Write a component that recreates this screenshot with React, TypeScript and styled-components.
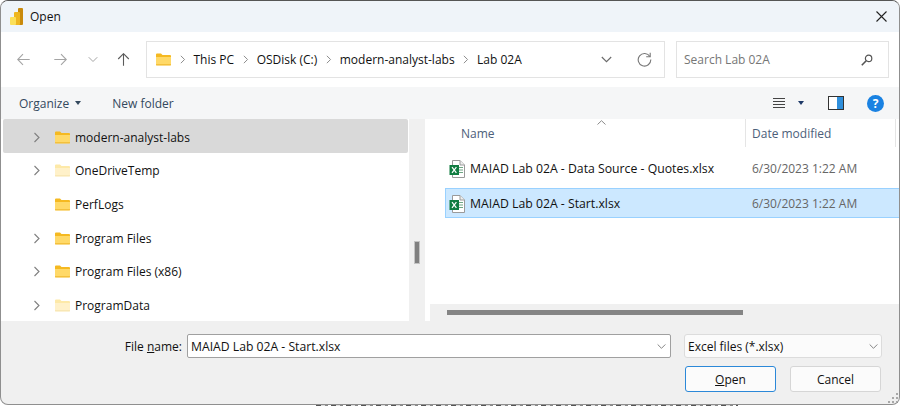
import React from "react";
import styled, { createGlobalStyle } from "styled-components";

const GlobalStyle = createGlobalStyle`
  html, body {
    margin: 0;
    padding: 0;
    background: #fff;
  }
  * {
    box-sizing: border-box;
  }
`;

const Page = styled.div`
  width: 900px;
  height: 406px;
  overflow: hidden;
  background: #fff;
  font-family: "Open Sans", "Noto Sans", sans-serif;
  font-size: 12px;
  color: #111;
`;

const Dialog = styled.div`
  width: 900px;
  height: 405px;
  border: 1px solid #8f8f8f;
  border-top-color: #555;
  border-radius: 8px;
  overflow: hidden;
  display: flex;
  flex-direction: column;
  background: #f0f0f0;
`;

// cut off text of the window behind the dialog
const BehindStrip = styled.div`
  height: 1px;
  margin-left: 316px;
  width: 422px;
  background: repeating-linear-gradient(90deg, #555 0 5px, #ddd 5px 9px, #888 9px 12px, #fff 12px 15px);
`;

const TitleBar = styled.div`
  height: 31px;
  flex-shrink: 0;
  background: #eff4f9;
  display: flex;
  align-items: center;
  padding: 0 12px 0 9px;
  gap: 7px;
`;

const CloseButton = styled.div`
  margin-left: auto;
  display: flex;
`;

const NavBar = styled.div`
  height: 55px;
  flex-shrink: 0;
  background: #fff;
  display: flex;
  align-items: center;
  padding: 0 10px 0 7px;
`;

const NavButton = styled.div<{ $w: number }>`
  width: ${(p) => p.$w}px;
  flex-shrink: 0;
  display: flex;
  justify-content: center;
`;

const ArrowSvg = styled.svg<{ $rotate: number }>`
  transform: rotate(${(p) => p.$rotate}deg);
`;

const Breadcrumb = styled.div`
  width: 519px;
  height: 37px;
  flex-shrink: 0;
  margin-left: 4px;
  border: 1px solid #e3e3e3;
  display: flex;
  align-items: center;
  padding: 0 12px 0 9px;
  gap: 6.75px;
`;

const RightIcons = styled.div`
  margin-left: auto;
  display: flex;
  align-items: center;
  gap: 25px;
`;

const SearchBox = styled.div`
  width: 213px;
  height: 37px;
  flex-shrink: 0;
  margin-left: 11px;
  border: 1px solid #e3e3e3;
  display: flex;
  align-items: center;
  justify-content: space-between;
  padding: 0 15px 0 7px;
  color: #767676;
`;

const Toolbar = styled.div`
  height: 32px;
  flex-shrink: 0;
  background: #f5f6f7;
  display: flex;
  align-items: center;
  padding: 0 15px 0 18px;
  color: #34495e;
`;

const ToolLabel = styled.span`
  display: flex;
  align-items: center;
  gap: 6px;
  margin-right: 31px;
`;

const Caret = styled.span<{ $color?: string }>`
  width: 0;
  height: 0;
  border-left: 3.5px solid transparent;
  border-right: 3.5px solid transparent;
  border-top: 4px solid ${(p) => p.$color || "#34495e"};
`;

const ToolIcons = styled.div`
  margin-left: auto;
  display: flex;
  align-items: center;
`;

const ViewGroup = styled.div`
  display: flex;
  align-items: center;
  gap: 13px;
  margin-right: 24px;
`;

const PaneToggle = styled.svg`
  margin-right: 23px;
`;

const Main = styled.div`
  height: 202px;
  flex-shrink: 0;
  background: #fff;
  display: flex;
`;

const Tree = styled.div`
  width: 408px;
  padding: 0 1px 0 2px;
  overflow: hidden;
`;

const TreeRow = styled.div<{ $active?: boolean }>`
  height: 34px;
  margin-bottom: -0.3px;
  padding-top: 2px;
  display: flex;
  align-items: center;
  border-radius: 2px;
  background: ${(p) => (p.$active ? "#d9d9d9" : "transparent")};
`;

const Expander = styled.span`
  width: 52px;
  padding-left: 28px;
  display: flex;
`;

const TreeName = styled.span`
  margin-left: 5px;
`;

const TreeScroll = styled.div`
  width: 16px;
  background: #f0f0f0;
  padding: 122px 0 0 5px;
`;

const ScrollThumb = styled.div`
  width: 6px;
  height: 23px;
  background: #808080;
  border: 1px solid #c4c4c4;
`;

const Gutter = styled.div`
  width: 5px;
`;

const ListPane = styled.div`
  flex: 1;
  display: flex;
  flex-direction: column;
  min-width: 0;
`;

const ListHeader = styled.div`
  height: 28px;
  flex-shrink: 0;
  position: relative;
  display: flex;
  align-items: center;
  color: #4c607a;
  padding-left: 31px;
`;

const SortMark = styled.span`
  position: absolute;
  left: 167px;
  top: 1px;
  display: flex;
`;

const DateColumn = styled.span`
  position: absolute;
  left: 315px;
  width: 151px;
  top: 0;
  bottom: 0;
  border-left: 1px solid #e5e5e5;
  border-right: 1px solid #e5e5e5;
  padding-left: 6px;
  display: flex;
  align-items: center;
`;

const FileRows = styled.div`
  flex: 1;
  padding: 6px 0 0 15px;
`;

const FileRow = styled.div<{ $selected?: boolean }>`
  height: 30px;
  margin-bottom: 5px;
  padding: 1px 0 0 3px;
  display: flex;
  align-items: center;
  font-size: 12.25px;
  border: 1px solid ${(p) => (p.$selected ? "#99d1ff" : "transparent")};
  border-right: 0;
  background: ${(p) => (p.$selected ? "#cce8ff" : "transparent")};
`;

const FileName = styled.span`
  width: 282px;
  margin-left: 5px;
`;

const FileDate = styled.span`
  color: #666;
  font-size: 12px;
`;

const HScroll = styled.div`
  height: 17px;
  flex-shrink: 0;
  background: #f0f0f0;
  padding: 6px 0 0 17px;
`;

const HThumb = styled.div`
  width: 296px;
  height: 5px;
  background: #858585;
`;

const Footer = styled.div`
  flex: 1;
  position: relative;
  padding-top: 13px;
  display: grid;
  grid-template-columns: 182px 484px 211px;
  grid-template-rows: 24px 26px;
  column-gap: 4px;
  row-gap: 8px;
`;

const FieldLabel = styled.label`
  display: flex;
  align-items: center;
  justify-content: flex-end;
  padding: 1px 1px 0 0;
`;

const NameInput = styled.div`
  background: #fff;
  border: 1px solid #a0a0a0;
  border-radius: 2px;
  display: flex;
  align-items: center;
  justify-content: space-between;
  padding: 1px 4px 0 3px;
  font-size: 12.2px;
`;

const TypeSelect = styled.div`
  width: 198px;
  height: 24px;
  margin-left: 9px;
  background: #fbfbfb;
  border: 1px solid #dcdcdc;
  border-radius: 3px;
  display: flex;
  align-items: center;
  justify-content: space-between;
  padding: 1px 3px 0 3px;
`;

const ButtonRow = styled.div`
  grid-column: 3;
  margin-left: 10px;
  display: flex;
  gap: 14px;
`;

const DialogButton = styled.div<{ $primary?: boolean }>`
  width: 91px;
  height: 26px;
  display: flex;
  align-items: center;
  justify-content: center;
  background: #fbfbfb;
  border: 1px solid ${(p) => (p.$primary ? "#2b88d8" : "#d6d6d6")};
  border-radius: 3px;
`;

const ResizeGrip = styled.span`
  position: absolute;
  right: 0;
  bottom: 0;
  display: flex;
`;

const FolderIcon = ({ pale }: { pale?: boolean }) => (
  <svg width="15" height="13" viewBox="0 0 15 13">
    <path d="M0 1.5 Q0 .5 1 .5 H5 L6.5 2 H14 Q15 2 15 3 V4 H0 Z" fill={pale ? "#fde9a8" : "#f5b921"} />
    <path d="M0 4 H15 V11.5 Q15 12.5 14 12.5 H1 Q0 12.5 0 11.5 Z" fill={pale ? "#fff1c9" : "#ffd968"} />
    <path d="M0 11.8 H15" stroke={pale ? "#f5e3ad" : "#eeb52c"} strokeWidth="1" />
  </svg>
);

const Chevron = ({ color = "#7f7f7f", size = 11 }: { color?: string; size?: number }) => (
  <svg width={size} height={size} viewBox="0 0 11 11" fill="none">
    <path d="M3.5 1 L8 5.5 L3.5 10" stroke={color} strokeWidth="1.1" />
  </svg>
);

const ChevronDown = ({ color = "#6a6a6a", w = 11 }: { color?: string; w?: number }) => (
  <svg width={w} height="7" viewBox="0 0 11 7" fill="none">
    <path d="M.8 1 L5.5 5.7 L10.2 1" stroke={color} strokeWidth="1.1" />
  </svg>
);

const Arrow = ({ dir, color }: { dir: "left" | "right" | "up"; color: string }) => {
  const rotate = dir === "left" ? 180 : dir === "up" ? -90 : 0;
  return (
    <ArrowSvg $rotate={rotate} width="13" height="13" viewBox="0 0 13 13" fill="none">
      <path d="M.3 6.5 H12.3 M7 1.2 L12.3 6.5 L7 11.8" stroke={color} strokeWidth="1.1" />
    </ArrowSvg>
  );
};

const ExcelIcon = () => (
  <svg width="16" height="18" viewBox="0 0 16 18">
    <path d="M3.5 .5 H11 L15.5 5 V17.5 H3.5 Z" fill="#fff" stroke="#9a9a9a" />
    <path d="M11 .5 V5 H15.5" fill="#eee" stroke="#9a9a9a" />
    <path d="M10 7.5 H14 M10 10 H14 M10 12.5 H14" stroke="#6fa583" strokeWidth="1.2" />
    <rect x="0.5" y="5" width="9.5" height="10" fill="#107c41" />
    <path d="M3 7.2 L7.4 12.8 M7.4 7.2 L3 12.8" stroke="#fff" strokeWidth="1.2" />
  </svg>
);

const PowerBiLogo = () => (
  <svg width="13" height="17" viewBox="0 0 13 17">
    <rect x="8" y="0" width="5" height="17" rx="1" fill="#c98a0c" />
    <rect x="4" y="4" width="6" height="13" rx="1" fill="#eeb620" />
    <rect x="0" y="9" width="6" height="8" rx="1" fill="#fbe05a" />
  </svg>
);

const folders = [
  { name: "modern-analyst-labs", active: true, expandable: true },
  { name: "OneDriveTemp", pale: true, expandable: true },
  { name: "PerfLogs" },
  { name: "Program Files", expandable: true },
  { name: "Program Files (x86)", expandable: true },
  { name: "ProgramData", pale: true, expandable: true },
];

const crumbs = ["This PC", "OSDisk (C:)", "modern-analyst-labs", "Lab 02A"];

const App = () => {
  return (
    <Page>
      <GlobalStyle />
      <Dialog>
        <TitleBar>
          <PowerBiLogo />
          <span>Open</span>
          <CloseButton>
            <svg width="11" height="11" viewBox="0 0 11 11" fill="none">
              <path d="M.5 .5 L10.5 10.5 M10.5 .5 L.5 10.5" stroke="#222" strokeWidth="1.1" />
            </svg>
          </CloseButton>
        </TitleBar>
        <NavBar>
          <NavButton $w={31}>
            <Arrow dir="left" color="#a4a4a4" />
          </NavButton>
          <NavButton $w={43}>
            <Arrow dir="right" color="#a4a4a4" />
          </NavButton>
          <NavButton $w={22}>
            <ChevronDown color="#a4a4a4" w={10} />
          </NavButton>
          <NavButton $w={38}>
            <Arrow dir="up" color="#5a5a5a" />
          </NavButton>
          <Breadcrumb>
            <FolderIcon />
            {crumbs.map((c) => (
              <React.Fragment key={c}>
                <Chevron size={9} />
                <span>{c}</span>
              </React.Fragment>
            ))}
            <RightIcons>
              <ChevronDown />
              <svg width="15" height="15" viewBox="0 0 15 15" fill="none">
                <path d="M12.9 4.5 A6.3 6.3 0 1 0 13.8 7.5" stroke="#777" strokeWidth="1.1" />
                <path d="M13.2 .8 V4.8 H9.2" stroke="#777" strokeWidth="1.1" />
              </svg>
            </RightIcons>
          </Breadcrumb>
          <SearchBox>
            <span>Search Lab 02A</span>
            <svg width="12" height="12" viewBox="0 0 12 12" fill="none">
              <circle cx="7.6" cy="4.4" r="3.2" stroke="#555" strokeWidth="1.2" />
              <path d="M5.2 6.8 L.8 11.2" stroke="#555" strokeWidth="1.6" />
            </svg>
          </SearchBox>
        </NavBar>
        <Toolbar>
          <ToolLabel>
            Organize <Caret />
          </ToolLabel>
          <span>New folder</span>
          <ToolIcons>
            <ViewGroup>
              <svg width="12" height="12" viewBox="0 0 12 12" fill="none">
                <path d="M0 1.5 H12 M0 4.5 H12 M0 7.5 H12 M0 10.5 H12" stroke="#444" strokeWidth="1.1" />
              </svg>
              <Caret $color="#1f3a68" />
            </ViewGroup>
            <PaneToggle width="16" height="14" viewBox="0 0 16 14">
              <rect x=".5" y=".5" width="15" height="13" fill="#fff" stroke="#333" />
              <rect x="9" y="1" width="6" height="12" fill="#2f8fdc" />
            </PaneToggle>
            <svg width="17" height="17" viewBox="0 0 17 17">
              <circle cx="8.5" cy="8.5" r="8.5" fill="#1a82e2" />
              <text x="8.5" y="13" textAnchor="middle" fontSize="12" fontWeight="700" fill="#fff" fontFamily="Open Sans">
                ?
              </text>
            </svg>
          </ToolIcons>
        </Toolbar>
        <Main>
          <Tree>
            {folders.map((f) => (
              <TreeRow key={f.name} $active={f.active}>
                <Expander>{f.expandable && <Chevron />}</Expander>
                <FolderIcon pale={f.pale} />
                <TreeName>{f.name}</TreeName>
              </TreeRow>
            ))}
          </Tree>
          <TreeScroll>
            <ScrollThumb />
          </TreeScroll>
          <Gutter />
          <ListPane>
            <ListHeader>
              Name
              <SortMark>
                <svg width="9" height="5" viewBox="0 0 9 5" fill="none">
                  <path d="M.5 4.5 L4.5 .7 L8.5 4.5" stroke="#8a8a8a" />
                </svg>
              </SortMark>
              <DateColumn>Date modified</DateColumn>
            </ListHeader>
            <FileRows>
              <FileRow>
                <ExcelIcon />
                <FileName>MAIAD Lab 02A - Data Source - Quotes.xlsx</FileName>
                <FileDate>6/30/2023 1:22 AM</FileDate>
              </FileRow>
              <FileRow $selected>
                <ExcelIcon />
                <FileName>MAIAD Lab 02A - Start.xlsx</FileName>
                <FileDate>6/30/2023 1:22 AM</FileDate>
              </FileRow>
            </FileRows>
            <HScroll>
              <HThumb />
            </HScroll>
          </ListPane>
        </Main>
        <Footer>
          <FieldLabel>
            <span>
              File <u>n</u>ame:
            </span>
          </FieldLabel>
          <NameInput>
            <span>MAIAD Lab 02A - Start.xlsx</span>
            <ChevronDown w={9} color="#777" />
          </NameInput>
          <TypeSelect>
            <span>Excel files (*.xlsx)</span>
            <ChevronDown w={9} color="#777" />
          </TypeSelect>
          <ButtonRow>
            <DialogButton $primary>
              <span>
                <u>O</u>pen
              </span>
            </DialogButton>
            <DialogButton>Cancel</DialogButton>
          </ButtonRow>
          <ResizeGrip>
            <svg width="11" height="11" viewBox="0 0 11 11" fill="#a8a8a8">
              <rect x="8" y="0" width="2" height="2" />
              <rect x="4" y="4" width="2" height="2" />
              <rect x="8" y="4" width="2" height="2" />
              <rect x="0" y="8" width="2" height="2" />
              <rect x="4" y="8" width="2" height="2" />
              <rect x="8" y="8" width="2" height="2" />
            </svg>
          </ResizeGrip>
        </Footer>
      </Dialog>
      <BehindStrip />
    </Page>
  );
};

export default App;
